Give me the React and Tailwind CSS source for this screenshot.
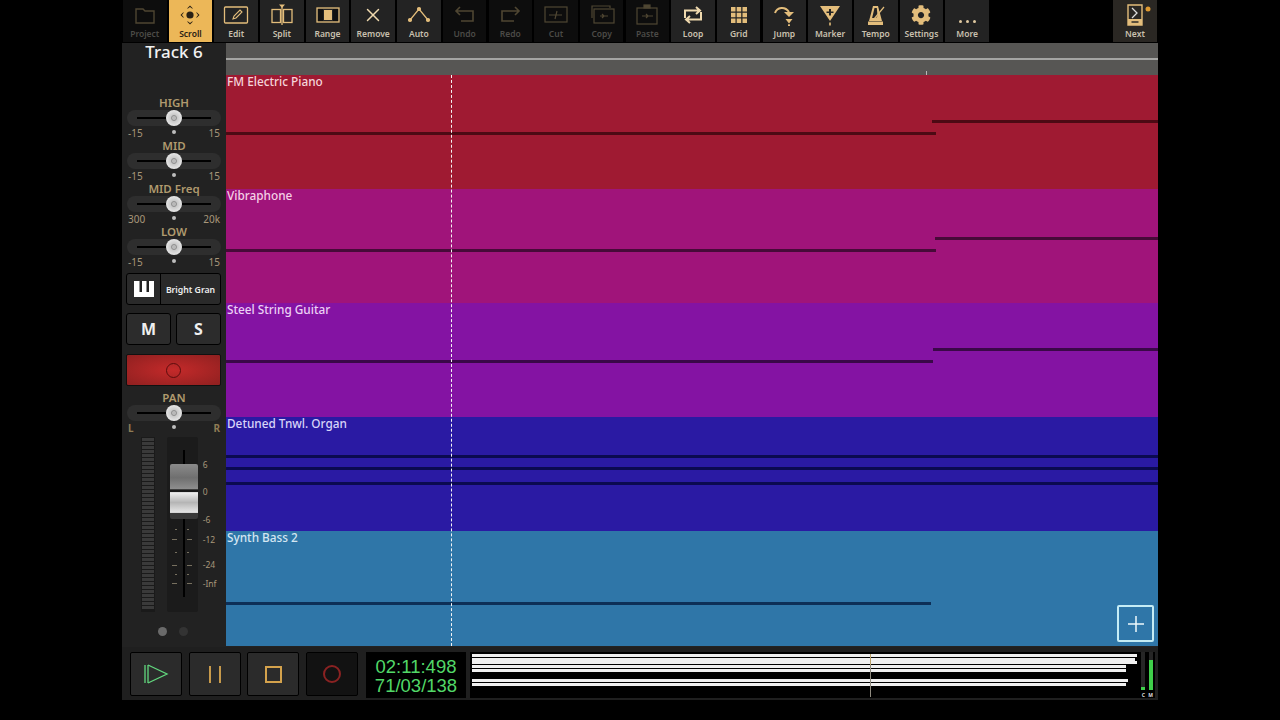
import React from 'react';
import { X } from 'lucide-react';
import { FaCog } from 'react-icons/fa';

// Toolbar icons, drawn in a 26x22 box
const icons = {
  Project: <path d="M4 5h7l2 2h9v12H4z" fill="none" stroke="currentColor" strokeWidth="1.4" />,
  Scroll: (
    <g fill="currentColor" stroke="none">
      <circle cx="13" cy="11" r="3.6" />
      <path d="M13 1.5l3 3h-1l-2-1.6-2 1.6h-1zM13 20.5l3-3h-1l-2 1.6-2-1.6h-1zM3.5 11l3-3v1l-1.6 2 1.6 2v1zM22.5 11l-3-3v1l1.6 2-1.6 2v1z" />
    </g>
  ),
  Edit: (
    <g fill="none" stroke="currentColor">
      <rect x="1.5" y="3" width="23" height="16" rx="1" strokeWidth="1.3" />
      <path d="M10 15l1-3 6-6 2 2-6 6z" strokeWidth="1.1" />
    </g>
  ),
  Split: (
    <g fill="none" stroke="currentColor" strokeWidth="1.3">
      <rect x="3" y="5.5" width="8.5" height="13" />
      <rect x="14.5" y="5.5" width="8.5" height="13" />
      <path d="M13 3v18" />
      <path d="M10 0.5h6l-3 3.5z" fill="currentColor" stroke="none" />
    </g>
  ),
  Range: (
    <g>
      <rect x="2" y="4" width="22" height="14" fill="none" stroke="currentColor" strokeWidth="1.3" />
      <rect x="3" y="5" width="5" height="12" fill="#111" />
      <rect x="18" y="5" width="5" height="12" fill="#111" />
      <rect x="9" y="6" width="8" height="10" fill="currentColor" />
    </g>
  ),
  Auto: (
    <g stroke="currentColor" strokeWidth="1.2" fill="currentColor">
      <path d="M4 16L13 5l9 11" fill="none" />
      <circle cx="4" cy="16" r="1.5" />
      <circle cx="13" cy="5" r="1.5" />
      <circle cx="22" cy="16" r="1.5" />
    </g>
  ),
  Undo: <path d="M8 3L4 7l4 4M4 7h17v10H9" fill="none" stroke="currentColor" strokeWidth="1.6" />,
  Redo: <path d="M18 3l4 4-4 4M22 7H5v10h12" fill="none" stroke="currentColor" strokeWidth="1.6" />,
  Cut: (
    <g fill="none" stroke="currentColor" strokeWidth="1.2">
      <rect x="2" y="3" width="22" height="15" />
      <path d="M6 11h13M14 7l-2 8" />
    </g>
  ),
  Copy: (
    <g fill="none" stroke="currentColor" strokeWidth="1.2">
      <path d="M3 14V2h18v2" />
      <rect x="5" y="5" width="20" height="14" />
      <path d="M11 12h8M13 10l2 2-2 2" />
    </g>
  ),
  Paste: (
    <g fill="none" stroke="currentColor" strokeWidth="1.2">
      <rect x="3" y="4" width="20" height="16" />
      <rect x="10" y="1" width="6" height="3" fill="currentColor" />
      <path d="M8 12h11M12 10l2 2-2 2" />
    </g>
  ),
  Loop: (
    <g fill="none" stroke="currentColor" strokeWidth="2">
      <path d="M5 14V6.5h14M16 3l4 3.5-4 3.5" />
      <path d="M21 8v7.5H7M10 12l-4 3.5 4 3.5" />
    </g>
  ),
  Grid: (
    <path
      fill="currentColor"
      d="M5 3h4.5v4.5H5zM10.7 3h4.5v4.5h-4.5zM16.5 3H21v4.5h-4.5zM5 8.8h4.5v4.5H5zM10.7 8.8h4.5v4.5h-4.5zM16.5 8.8H21v4.5h-4.5zM5 14.5h4.5V19H5zM10.7 14.5h4.5V19h-4.5zM16.5 14.5H21V19h-4.5z"
    />
  ),
  Jump: (
    <g>
      <path d="M4 9C6 3 14 2 18 8" fill="none" stroke="currentColor" strokeWidth="2" />
      <path d="M13 8h10l-5 5zM14.5 15h7l-3.5 4.5z" fill="currentColor" />
      <rect x="17" y="20.3" width="2" height="1.7" fill="currentColor" />
    </g>
  ),
  Marker: (
    <g fill="currentColor">
      <path fillRule="evenodd" d="M3 2h20l-10 15zM12 5v2.5H9.5v1.5H12v2.5h2V9h2.500V7.5H14V5z" />
      <rect x="12.2" y="18.5" width="1.6" height="3" />
    </g>
  ),
  Tempo: (
    <g fill="currentColor">
      <path fillRule="evenodd" d="M10 2h5l4 15H6zM11.5 4l-2.400 10h4l1.400-2L13.8 4z" />
      <rect x="5" y="17.5" width="15" height="3.5" />
      <path d="M11 15L21 3" stroke="currentColor" strokeWidth="1.2" />
    </g>
  ),
  Next: (
    <g>
      <path d="M6 1h14v20H6z" fill="none" stroke="currentColor" strokeWidth="1.4" />
      <rect x="6" y="15" width="14" height="6" fill="currentColor" />
      <rect x="9.5" y="17.3" width="7" height="1.4" fill="#222" />
      <path d="M10 4l5 5-5 5" fill="none" stroke="#ddd" strokeWidth="1.3" />
      <circle cx="26" cy="5" r="2.5" fill="#e09a30" />
    </g>
  ),
};

const toolbarItems = [
  { name: 'Project', off: true },
  { name: 'Scroll', active: true },
  { name: 'Edit' },
  { name: 'Split' },
  { name: 'Range' },
  { name: 'Remove' },
  { name: 'Auto' },
  { name: 'Undo', off: true },
  { name: 'Redo', off: true },
  { name: 'Cut', off: true },
  { name: 'Copy', off: true },
  { name: 'Paste', off: true },
  { name: 'Loop' },
  { name: 'Grid' },
  { name: 'Jump' },
  { name: 'Marker' },
  { name: 'Tempo' },
  { name: 'Settings' },
  { name: 'More' },
];

const ToolIcon = ({ name }) => {
  if (name === 'Remove') return <X size={24} strokeWidth={1.6} className="h-[22px]" />;
  if (name === 'Settings') return <FaCog size={20} className="h-[22px]" />;
  if (name === 'More') {
    return (
      <div className="flex h-[22px] items-end justify-center gap-[4px] pb-[3px]">
        <span className="h-[3px] w-[3px] rounded-full bg-[#e0c9a0]" />
        <span className="h-[3px] w-[3px] rounded-full bg-[#e0c9a0]" />
        <span className="h-[3px] w-[3px] rounded-full bg-[#e0c9a0]" />
      </div>
    );
  }
  return (
    <svg width="26" height="22" viewBox="0 0 26 22" className="overflow-visible">
      {icons[name]}
    </svg>
  );
};

const ToolButton = ({ name, active, off }) => {
  let cls = 'bg-[#232323] text-[#e3bd7b]';
  let label = 'text-[#c9c0ae]';
  if (active) {
    cls = 'bg-[#ecb758] text-[#2a2114]';
    label = 'text-[#2a2114]';
  } else if (off) {
    cls = 'bg-[#0d0d0d] text-[#4f4632]';
    label = 'text-[#4b4a46]';
  } else if (name === 'Remove' || name === 'Loop') {
    cls = 'bg-[#232323] text-[#efd9ae]';
  }
  return (
    <div className={`flex h-[42px] w-[43.5px] shrink-0 flex-col items-center pt-[4px] ${cls}`}>
      <ToolIcon name={name} />
      <span className={`mt-[2px] text-[8.5px] font-semibold leading-[11px] ${label}`}>{name}</span>
    </div>
  );
};

const Slider = ({ label, left, right, pan }) => (
  <div className="flex h-[43px] flex-col items-center">
    <div className="h-[15px] text-[11.5px] font-semibold leading-[15px] text-[#b09a6e]">{label}</div>
    <div className="relative flex h-[16px] w-[94px] items-center justify-center rounded-full bg-[#2e2e2e]">
      <div className="h-[2px] w-[74px] bg-black" />
      <div className="absolute left-[39px] top-0 flex h-[16px] w-[16px] items-center justify-center rounded-full bg-[radial-gradient(circle_at_center,#b5b5b5,#e6e6e6_70%,#a8a8a8)]">
        <div className="h-[6px] w-[6px] rounded-full border border-[#8f8f8f]" />
      </div>
    </div>
    <div className="relative mt-[1px] flex h-[11px] w-[92px] items-center justify-between text-[10px] leading-[12px] text-[#a8977a]">
      <span className={pan ? 'font-bold text-[#8f7c55]' : ''}>{left}</span>
      <span className="absolute left-[44px] top-[3px] h-[4px] w-[4px] rounded-full bg-[#bdbdbd]" />
      <span className={pan ? 'font-bold text-[#8f7c55]' : ''}>{right}</span>
    </div>
  </div>
);

const LeftPanel = () => (
  <div className="flex w-[104px] shrink-0 flex-col bg-[#222222]">
    <div className="h-[52px] text-center text-[17px] font-medium leading-[18px] text-[#f2f2f2]">Track 6</div>
    <div className="flex flex-col px-[4px]">
      <Slider label="HIGH" left="-15" right="15" />
      <Slider label="MID" left="-15" right="15" />
      <Slider label="MID Freq" left="300" right="20k" />
      <Slider label="LOW" left="-15" right="15" />
    </div>
    <div className="ml-[4px] mr-[5px] mt-[6px] flex h-[32px] rounded-[3px] border border-black bg-[#2a2a2a]">
      <div className="flex w-[34px] items-center justify-center border-r border-black">
        <svg width="20" height="16" viewBox="0 0 20 16">
          <rect width="20" height="16" fill="#fff" />
          <rect x="5.5" width="2.5" height="11" fill="#222" />
          <rect x="12.5" width="2.5" height="11" fill="#222" />
        </svg>
      </div>
      <div className="flex flex-1 items-center justify-center pt-[4px] text-[8.7px] font-semibold text-[#eeeeee]">Bright Gran</div>
    </div>
    <div className="ml-[4px] mr-[5px] mt-[8px] flex gap-[5px]">
      <div className="flex h-[32px] flex-1 items-center justify-center rounded-[3px] border border-black bg-[#2c2c2c] text-[16px] font-bold text-[#efefef]">M</div>
      <div className="flex h-[32px] flex-1 items-center justify-center rounded-[3px] border border-black bg-[#2c2c2c] text-[16px] font-bold text-[#efefef]">S</div>
    </div>
    <div className="ml-[4px] mr-[5px] mt-[9px] flex h-[32px] items-center justify-center rounded-[2px] border border-[#111] bg-[radial-gradient(ellipse_at_center,#c42a2a,#8f2020)]">
      <div className="h-[15px] w-[15px] rounded-full border border-[#5c0d0d]" />
    </div>
    <div className="mt-[4px] px-[4px]">
      <Slider label="PAN" left="L" right="R" pan />
    </div>
    <div className="ml-[19px] mt-[4px] flex gap-[12px]">
      {/* meter */}
      <div className="flex h-[175px] w-[15px] flex-col gap-[1px] bg-[#1a1a1a] px-[1px] py-[1px]">
        {Array.from({ length: 43 }).map((_, i) => (
          <div key={i} className="h-[3px] bg-[#3a3a3a]" />
        ))}
      </div>
      {/* fader */}
      <div className="relative h-[175px] w-[34px] rounded-[2px] bg-[#1b1b1b]">
        <div className="absolute left-[16px] top-[13px] h-[147px] w-[2px] bg-black" />
        {[92, 102, 115, 128, 137, 146].map((t, i) => (
          <div key={t} className="absolute inset-x-0 flex justify-center gap-[10px]" style={{ top: t }}>
            <span className={`h-[1px] bg-[#77705f] ${i % 2 ? 'w-[5px]' : 'w-[2px]'}`} />
            <span className={`h-[1px] bg-[#77705f] ${i % 2 ? 'w-[5px]' : 'w-[2px]'}`} />
          </div>
        ))}
        <div className="absolute left-[3px] top-[27px] h-[55px] w-[28px] rounded-[2px] bg-[linear-gradient(to_bottom,#8b8b8b_0%,#6f6f6f_25%,#8e8e8e_45%,#1a1a1a_47%,#1a1a1a_50%,#f0f0f0_52%,#b5b5b5_70%,#e6e6e6_88%,#3a3a3a_90%)]" />
      </div>
      <div className="relative w-[18px]">
        {[['6', 24], ['0', 51], ['-6', 79], ['-12', 99], ['-24', 124], ['-Inf', 143]].map(([s, t]) => (
          <div key={s} className="absolute left-[-7px] text-[8.5px] leading-none text-[#a8977a]" style={{ top: t }}>
            {s}
          </div>
        ))}
      </div>
    </div>
    <div className="ml-[36px] mt-[15px] flex gap-[12px]">
      <div className="h-[9px] w-[9px] rounded-full bg-[#6a6a6a]" />
      <div className="h-[9px] w-[9px] rounded-full bg-[#333333]" />
    </div>
  </div>
);

const tracks = [
  {
    name: 'FM Electric Piano',
    bg: 'bg-[#9f1a32]',
    text: 'text-[#f5d5db]',
    line: 'bg-[#4c0a14]',
    notes: [
      { l: 0, r: 710, y: 57 },
      { l: 706, r: 932, y: 45 },
    ],
  },
  {
    name: 'Vibraphone',
    bg: 'bg-[#a0147a]',
    text: 'text-[#f5d0e6]',
    line: 'bg-[#470a38]',
    notes: [
      { l: 0, r: 710, y: 60 },
      { l: 709, r: 932, y: 48 },
    ],
  },
  {
    name: 'Steel String Guitar',
    bg: 'bg-[#8413a3]',
    text: 'text-[#ecd0f5]',
    line: 'bg-[#3a0848]',
    notes: [
      { l: 0, r: 707, y: 57 },
      { l: 707, r: 932, y: 45 },
    ],
  },
  {
    name: 'Detuned Tnwl. Organ',
    bg: 'bg-[#2a1aa3]',
    text: 'text-[#d8d4f8]',
    line: 'bg-[#0b0a50]',
    notes: [
      { l: 0, r: 932, y: 38 },
      { l: 0, r: 932, y: 50 },
      { l: 0, r: 932, y: 65 },
    ],
  },
  {
    name: 'Synth Bass 2',
    bg: 'bg-[#2f76a8]',
    text: 'text-[#d4e6f2]',
    line: 'bg-[#0d2f57]',
    notes: [{ l: 0, r: 705, y: 71 }],
  },
];

const Track = ({ name, bg, text, line, notes, last }) => (
  <div className={`relative ${last ? 'h-[115px]' : 'h-[114px]'} ${bg}`}>
    <div className={`pl-[1px] text-[11.8px] font-medium leading-[13px] ${text}`}>{name}</div>
    {notes.map((n, i) => (
      <div key={i} className={`absolute h-[3px] ${line}`} style={{ left: n.l, width: n.r - n.l, top: n.y }} />
    ))}
  </div>
);

const Timeline = () => (
  <div className="relative min-w-0 flex-1 bg-[#222222]">
    <div className="relative h-[32px] bg-[#575654]">
      <div className="absolute inset-x-0 top-[15px] h-[2px] bg-[#a5a5a3]" />
      <div className="absolute left-[700px] top-[28px] h-[4px] w-[1px] bg-[#b8b8b8]" />
    </div>
    {tracks.map((t, i) => (
      <Track key={t.name} {...t} last={i === tracks.length - 1} />
    ))}
    <div className="absolute bottom-[1px] left-[225px] top-[32px] w-0 border-l border-dashed border-[#f4f4f4]" />
    <div className="absolute bottom-[5px] right-[4px] flex h-[37px] w-[37px] items-center justify-center rounded-[2px] border-2 border-[#c5ecf5] text-[#eef9fb]">
      <svg width="18" height="18" viewBox="0 0 18 18" stroke="currentColor" strokeWidth="1.5">
        <path d="M9 1v16M1 9h16" />
      </svg>
    </div>
  </div>
);

const TransportButton = ({ children, dark }) => (
  <div
    className={`flex h-[44px] w-[52px] items-center justify-center rounded-[2px] border border-black ${dark ? 'bg-[#121212]' : 'bg-[#2b2b2b]'}`}
  >
    {children}
  </div>
);

const overviewBars = [
  { y: 1.5, w: 665 },
  { y: 5.5, w: 663 },
  { y: 9, w: 665 },
  { y: 13, w: 654 },
  { y: 16.5, w: 654 },
  { y: 27, w: 656 },
  { y: 31, w: 654 },
];

const Transport = () => (
  <div className="flex h-[53px] items-start bg-[#1f1f1f] pl-[8px] pr-[3px] pt-[5px]">
    <div className="flex gap-[6.5px]">
      <TransportButton>
        <svg width="28" height="22" viewBox="0 0 28 22" fill="none" stroke="#62d77e" strokeWidth="1.3">
          <path d="M3 2v18M6 2v18" />
          <path d="M6 2l19 9-19 9" />
        </svg>
      </TransportButton>
      <TransportButton>
        <div className="flex gap-[8px]">
          <div className="h-[17px] w-[2px] bg-[#c79a4b]" />
          <div className="h-[17px] w-[2px] bg-[#c79a4b]" />
        </div>
      </TransportButton>
      <TransportButton>
        <div className="h-[17px] w-[17px] border-2 border-[#d4a24c]" />
      </TransportButton>
      <TransportButton dark>
        <div className="h-[18px] w-[18px] rounded-full border-2 border-[#8a2222]" />
      </TransportButton>
    </div>
    <div className="ml-[8.5px] flex h-[46px] w-[100px] flex-col items-center justify-center bg-black pt-[1px] font-['Liberation_Sans',sans-serif] text-[18.5px] leading-[19px] text-[#52d868]">
      <div>02:11:498</div>
      <div>71/03/138</div>
    </div>
    <div className="relative ml-[4px] h-[46px] min-w-0 flex-1 bg-black">
      {overviewBars.map((b) => (
        <div key={b.y} className="absolute left-[2px] h-[3px] bg-[#f0f0f0]" style={{ top: b.y, width: b.w }} />
      ))}
      <div className="absolute bottom-[1px] left-[400px] top-[2px] w-[1px] bg-[linear-gradient(to_bottom,#b9a06a_0%,#b9a06a_25%,#8f8b80_26%)]" />
      <div className="absolute right-[2px] top-0 flex h-[46px] gap-[3px]">
        <div className="flex flex-col items-center">
          <div className="flex h-[38px] w-[4px] flex-col justify-end bg-[#262626]">
            <div className="h-[3px] bg-[#3fcf4a]" />
          </div>
          <span className="mt-[2px] text-[5px] font-bold leading-[6px] text-[#dddddd]">C</span>
        </div>
        <div className="flex flex-col items-center">
          <div className="flex h-[38px] w-[4px] flex-col justify-end bg-[#262626]">
            <div className="h-[30px] bg-[#3fcf4a]" />
          </div>
          <span className="mt-[2px] text-[5px] font-bold leading-[6px] text-[#dddddd]">M</span>
        </div>
      </div>
    </div>
  </div>
);

export default function App() {
  return (
    <div className="flex h-[720px] w-[1280px] justify-center bg-black font-['Noto_Sans',sans-serif]">
      <div className="flex h-[700px] w-[1036px] flex-col">
        <div className="flex h-[43px] shrink-0 gap-[2.2px] bg-black pl-[1px]">
          {toolbarItems.map((t) => (
            <ToolButton key={t.name} {...t} />
          ))}
          <div className="ml-auto mr-[1px]">
            <div className="flex h-[42px] w-[44px] flex-col items-center bg-[#2a2723] pt-[4px] text-[#e3bd7b]">
              <ToolIcon name="Next" />
              <span className="mt-[2px] text-[8.5px] font-semibold leading-[11px] text-[#c9c0ae]">Next</span>
            </div>
          </div>
        </div>
        <div className="flex min-h-0 flex-1">
          <LeftPanel />
          <Timeline />
        </div>
        <Transport />
      </div>
    </div>
  );
}
